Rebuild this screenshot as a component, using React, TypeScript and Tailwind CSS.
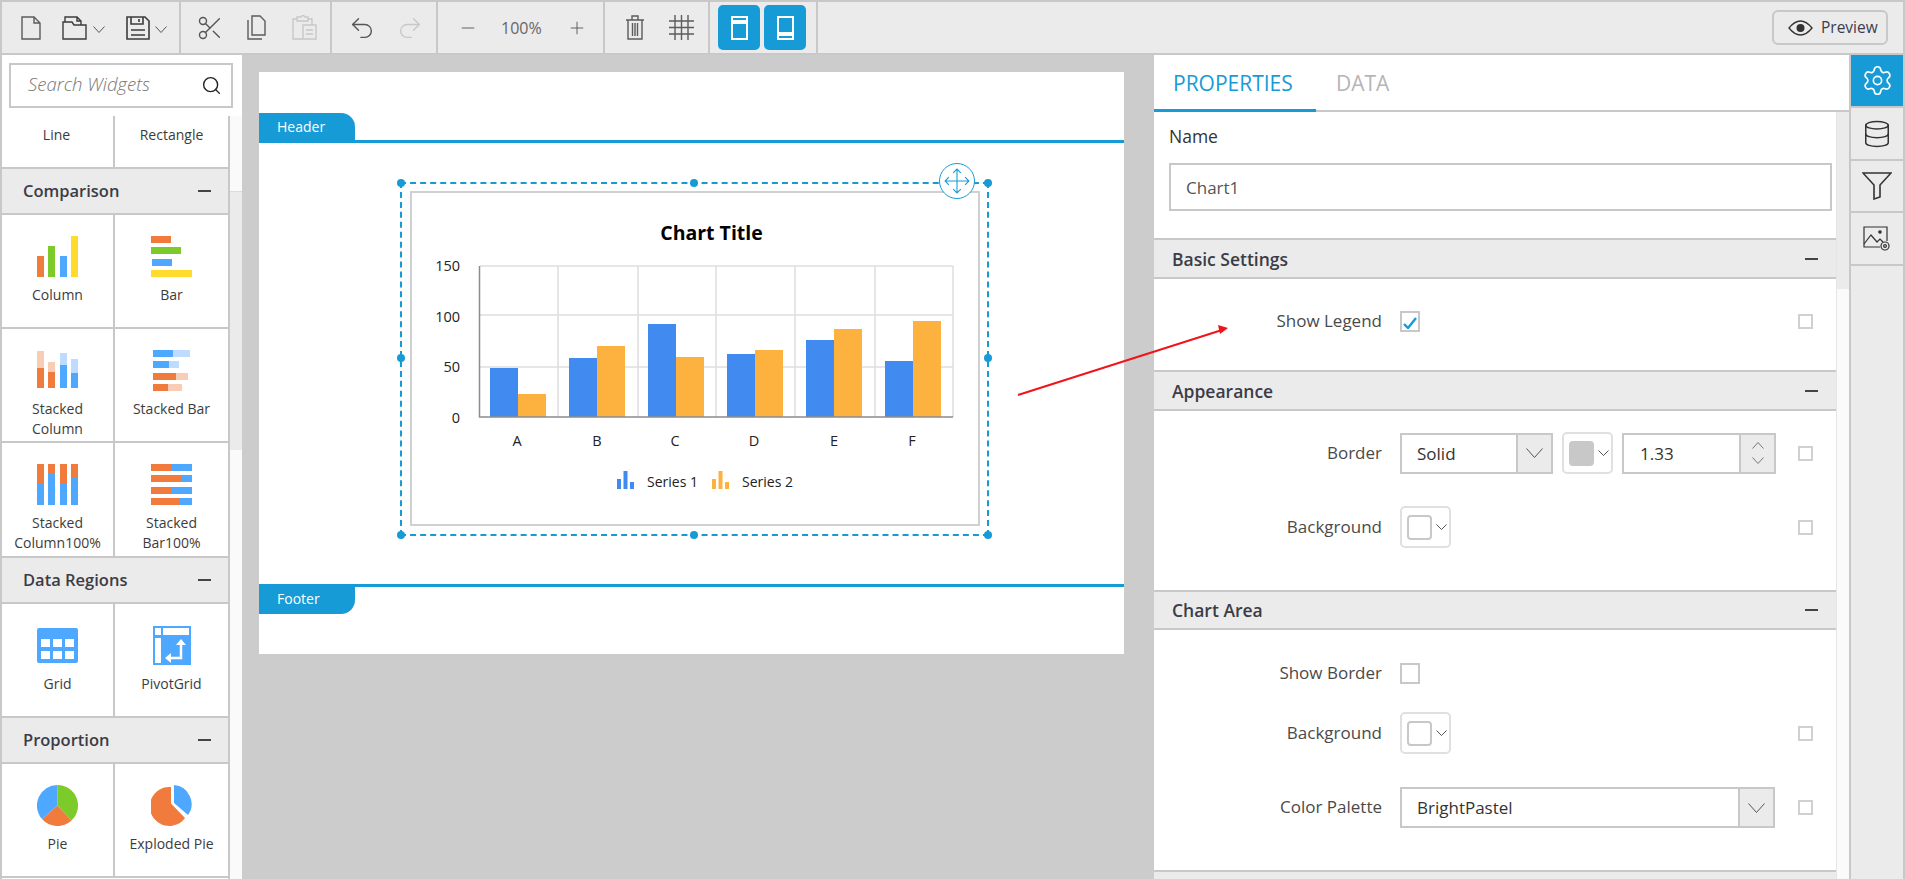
import { Scissors, Undo2, Redo2, Minus, Plus, Search, Settings, Database } from 'lucide-react';

const ORANGE = '#f07b3c';
const LORANGE = '#f9cdb5';
const BLUE = '#4ea8ff';
const LBLUE = '#bddcff';
const GREEN = '#7dcb2b';
const YELLOW = '#ffdb2e';

const bars = [
  { x: 490, a: 368, b: 394 },
  { x: 569, a: 358, b: 346 },
  { x: 648, a: 324, b: 357 },
  { x: 727, a: 354, b: 350 },
  { x: 806, a: 340, b: 329 },
  { x: 885, a: 361, b: 321 },
];

function Chevron({ w = 12, h = 7, color = '#555' }: { w?: number; h?: number; color?: string }) {
  return (
    <svg width={w} height={h} viewBox={`0 0 ${w} ${h}`} fill="none">
      <path d={`M0.5 0.5L${w / 2} ${h - 0.5}L${w - 0.5} 0.5`} stroke={color} strokeWidth="1" />
    </svg>
  );
}

function WidgetIcon({ name }: { name: string }) {
  const r = (x: number, y: number, w: number, h: number, fill: string) => <rect x={x} y={y} width={w} height={h} fill={fill} />;
  let body = null;
  if (name === 'Column') {
    body = (
      <>
        {r(0, 20, 7, 21, ORANGE)}
        {r(11, 10, 7, 31, GREEN)}
        {r(23, 20, 7, 21, BLUE)}
        {r(34, 0, 7, 41, YELLOW)}
      </>
    );
  } else if (name === 'Bar') {
    body = (
      <>
        {r(0, 0, 20, 7, ORANGE)}
        {r(0, 11, 30, 7, GREEN)}
        {r(1, 23, 20, 7, BLUE)}
        {r(0, 34, 41, 7, YELLOW)}
      </>
    );
  } else if (name === 'Stacked Column') {
    body = (
      <>
        {r(0, 1, 7, 17, LORANGE)}
        {r(0, 18, 7, 20, ORANGE)}
        {r(11, 12, 7, 10, LORANGE)}
        {r(11, 22, 7, 16, ORANGE)}
        {r(23, 3, 7, 12, LBLUE)}
        {r(23, 15, 7, 23, BLUE)}
        {r(34, 9, 7, 14, LBLUE)}
        {r(34, 23, 7, 15, BLUE)}
      </>
    );
  } else if (name === 'Stacked Bar') {
    body = (
      <>
        {r(2, 0, 37, 7, LBLUE)}
        {r(2, 0, 20, 7, BLUE)}
        {r(2, 11, 26, 7, LBLUE)}
        {r(2, 11, 16, 7, BLUE)}
        {r(2, 23, 35, 7, LORANGE)}
        {r(2, 23, 23, 7, ORANGE)}
        {r(2, 34, 29, 7, LORANGE)}
        {r(2, 34, 15, 7, ORANGE)}
      </>
    );
  } else if (name === 'Stacked Column100%') {
    body = (
      <>
        {[
          [0, 20],
          [11, 10],
          [23, 20],
          [34, 13],
        ].map(([x, h]) => (
          <g key={x}>
            {r(x, 0, 7, h, ORANGE)}
            {r(x, h, 7, 41 - h, BLUE)}
          </g>
        ))}
      </>
    );
  } else if (name === 'Stacked Bar100%') {
    body = (
      <>
        {[
          [0, 20],
          [11, 30],
          [23, 20],
          [34, 28],
        ].map(([y, w]) => (
          <g key={y}>
            {r(0, y, w, 7, ORANGE)}
            {r(w, y, 41 - w, 7, BLUE)}
          </g>
        ))}
      </>
    );
  } else if (name === 'Grid') {
    body = (
      <>
        <rect x="0" y="3" width="41" height="35" rx="2" fill={BLUE} />
        {[4, 16, 28].map((x) => (
          <g key={x}>
            {r(x, 14, 9, 8, '#fff')}
            {r(x, 26, 9, 8, '#fff')}
          </g>
        ))}
      </>
    );
  } else if (name === 'PivotGrid') {
    body = (
      <>
        {r(2, 1, 38, 39, BLUE)}
        {r(12, 3, 26, 7, '#fff')}
        {r(4, 3, 6, 7, '#fff')}
        {r(4, 13, 6, 25, '#fff')}
        <path d="M18 33H30V18" stroke="#fff" strokeWidth="2.5" fill="none" />
        <path d="M25 20L30 14L35 20Z M20 28L14 33L20 38Z" fill="#fff" />
      </>
    );
  } else if (name === 'Pie') {
    body = (
      <>
        <path d="M20.5 20.5V0A20.5 20.5 0 0 1 34.5 35.5Z" fill={GREEN} />
        <path d="M20.5 20.5L34.5 35.5A20.5 20.5 0 0 1 5 34Z" fill={ORANGE} />
        <path d="M20.5 20.5L5 34A20.5 20.5 0 0 1 20.5 0Z" fill={BLUE} />
      </>
    );
  } else if (name === 'Exploded Pie') {
    body = (
      <>
        <path d="M23 18V0A19 19 0 0 1 37 30Z" fill={BLUE} />
        <path d="M20 18.5V2A19.5 19.5 0 1 0 34 33Z" fill={ORANGE} />
      </>
    );
  }
  return (
    <svg width="41" height="41" viewBox="0 0 41 41" className="mt-[21px] shrink-0">
      {body}
    </svg>
  );
}

function Cell({ name, lines, width }: { name: string; lines?: string[]; width: string }) {
  return (
    <div className={`${width} flex flex-col items-center`}>
      <WidgetIcon name={name} />
      <div className="mt-[8px] text-center text-[14px] leading-[20px] text-[#3c3c3c]">
        {(lines ?? [name]).map((l) => (
          <div key={l}>{l}</div>
        ))}
      </div>
    </div>
  );
}

function CellRow({ a, b, h = 'h-[114px]' }: { a: { name: string; lines?: string[] }; b: { name: string; lines?: string[] }; h?: string }) {
  return (
    <div className={`${h} flex border-b-2 border-[#c8c8c8]`}>
      <Cell {...a} width="w-[111px] border-r-2 border-[#c8c8c8] box-content" />
      <Cell {...b} width="w-[113px]" />
    </div>
  );
}

function GroupHeader({ title }: { title: string }) {
  return (
    <div className="h-[46px] flex items-center justify-between bg-[#ebebeb] border-b-2 border-[#c8c8c8] pl-[21px] pr-[17px]">
      <span className="text-[16.5px] font-semibold text-[#3c3c46]">{title}</span>
      <span className="w-[13px] h-[2px] bg-[#444]" />
    </div>
  );
}

function LeftPanel() {
  return (
    <div className="w-[242px] shrink-0 flex flex-col bg-white border-l-2 border-[#c8c8c8]">
      <div className="h-[61px] pl-[7px] pt-[8px]">
        <div className="w-[224px] h-[45px] border-2 border-[#c8c8c8] flex items-center justify-between pl-[17px] pr-[9px]">
          <span className="italic font-light text-[18.5px] leading-[24px] pb-[3px] text-[#777]">Search Widgets</span>
          <Search size={21} strokeWidth={1.6} className="text-[#222]" />
        </div>
      </div>
      <div className="flex-1 flex min-h-0">
        <div className="w-[228px] border-r-2 border-[#c8c8c8] box-content">
          <div className="h-[53px] flex border-b-2 border-[#c8c8c8] text-[14px] text-[#3c3c3c]">
            <div className="w-[113px] border-r-2 border-[#c8c8c8] flex items-center justify-center pb-[14px] pr-[2px]">Line</div>
            <div className="w-[113px] flex items-center justify-center pb-[14px]">Rectangle</div>
          </div>
          <GroupHeader title="Comparison" />
          <CellRow a={{ name: 'Column' }} b={{ name: 'Bar' }} />
          <CellRow a={{ name: 'Stacked Column', lines: ['Stacked', 'Column'] }} b={{ name: 'Stacked Bar' }} />
          <CellRow
            h="h-[115px]"
            a={{ name: 'Stacked Column100%', lines: ['Stacked', 'Column100%'] }}
            b={{ name: 'Stacked Bar100%', lines: ['Stacked', 'Bar100%'] }}
          />
          <GroupHeader title="Data Regions" />
          <CellRow a={{ name: 'Grid' }} b={{ name: 'PivotGrid' }} />
          <GroupHeader title="Proportion" />
          <CellRow a={{ name: 'Pie' }} b={{ name: 'Exploded Pie' }} />
        </div>
        <div className="w-[12px] bg-[#fafafa] flex flex-col">
          <div className="h-[76px] border-b border-[#dcdcdc]" />
          <div className="h-[258px] bg-[#ebebeb]" />
        </div>
      </div>
    </div>
  );
}

function Toolbar() {
  const sep = 'h-full border-r-2 border-[#c8c8c8] flex items-center shrink-0';
  return (
    <div className="h-[55px] shrink-0 flex items-center bg-[#ebebeb] border-2 border-[#c8c8c8] text-[#555]">
      <div className={`${sep} w-[179px]`}>
        <svg width="20" height="24" viewBox="0 0 20 24" fill="none" className="ml-[19px]" stroke="#5c5c5c" strokeWidth="1.4">
          <path d="M1 1H13L19 7V23H1Z M13 1V7H19" />
        </svg>
        <svg width="26" height="24" viewBox="0 0 26 24" fill="none" className="ml-[21px]" stroke="#3c3c3c" strokeWidth="1.4">
          <path d="M1 23V6H10L12 9H24V23Z M3 6V1H15L19 5V9 M15 1V5H19" />
        </svg>
        <span className="ml-[5px] mt-[4px]">
          <Chevron />
        </span>
        <svg width="24" height="24" viewBox="0 0 24 24" fill="none" className="ml-[21px]" stroke="#3c3c3c" strokeWidth="1.6">
          <path d="M1 1H19L23 5V23H1Z M5 1V8H17V1 M13 3V6 M5 14H19 M5 19H19" />
        </svg>
        <span className="ml-[5px] mt-[4px]">
          <Chevron />
        </span>
      </div>
      <div className={`${sep} w-[151px]`}>
        <Scissors size={28} strokeWidth={1.2} className="ml-[15px] text-[#555]" />
        <svg width="21" height="25" viewBox="0 0 21 25" fill="none" className="ml-[23px]" stroke="#5c5c5c" strokeWidth="1.4">
          <path d="M5 1H13L18 6V20H5Z M1 5V24H15" />
        </svg>
        <svg width="25" height="25" viewBox="0 0 25 25" fill="none" className="ml-[24px]" stroke="#c8c8c8" strokeWidth="1.4">
          <path d="M5 4H1V24H11 M16 4H20V10 M5 6V2H9L11 0L13 2H16V6Z M11 10H24V24H11Z M14 15H21 M14 19H21" />
        </svg>
      </div>
      <div className={`${sep} w-[106px]`}>
        <Undo2 size={28} strokeWidth={1.2} className="ml-[16px] text-[#555]" />
        <Redo2 size={28} strokeWidth={1.2} className="ml-[20px] text-[#c8c8c8]" />
      </div>
      <div className={`${sep} w-[167px]`}>
        <Minus size={20} strokeWidth={1.1} className="ml-[20px] text-[#555]" />
        <span className="ml-[23px] w-[46px] text-[16px] text-[#666]">100%</span>
        <Plus size={20} strokeWidth={1.1} className="ml-[20px] text-[#555]" />
      </div>
      <div className={`${sep} w-[105px]`}>
        <svg width="20" height="25" viewBox="0 0 20 25" fill="none" className="ml-[20px]" stroke="#5c5c5c" strokeWidth="1.4">
          <path d="M1 5H19 M7 5V1H13V5 M3 5V24H17V5 M7.5 8V21 M10 8V21 M12.5 8V21" />
        </svg>
        <svg width="25" height="25" viewBox="0 0 25 25" fill="none" className="ml-[24px]" stroke="#5c5c5c" strokeWidth="1.4">
          <path d="M6 0V25 M12.5 0V25 M19 0V25 M0 6H25 M0 12.5H25 M0 19H25" />
        </svg>
      </div>
      <div className={`${sep} w-[108px] pl-[8px] gap-[4px]`}>
        {[false, true].map((low) => (
          <div key={String(low)} className="w-[42px] h-[45px] rounded-[5px] bg-[#179bd7] flex items-center justify-center">
            <div className={`w-[17px] h-[24px] border-2 border-white flex flex-col ${low ? 'justify-end pb-[2px]' : 'pt-[2px]'}`}>
              <div className="h-[4px] bg-white" />
            </div>
          </div>
        ))}
      </div>
      <div className="flex-1" />
      <div className="mr-[15px] w-[116px] h-[35px] border-2 border-[#c8c8c8] rounded-[6px] flex items-center pl-[14px] gap-[8px]">
        <svg width="25" height="16" viewBox="0 0 25 16" fill="none">
          <path d="M1 8C5 3 9 1 12.5 1S20 3 24 8C20 13 16 15 12.5 15S5 13 1 8Z" stroke="#333" strokeWidth="1.3" />
          <circle cx="12.5" cy="8" r="4" fill="#333" />
        </svg>
        <span className="text-[15.5px] text-[#3c3c50]">Preview</span>
      </div>
    </div>
  );
}

function ChartPreview() {
  const grid = '#dedede';
  return (
    <svg width="565" height="331" viewBox="412 193 565 331" className="block" fontFamily="'Open Sans', sans-serif">
      <text x="711.5" y="240" textAnchor="middle" fontSize="19.5" fontWeight="700" fill="#000">
        Chart Title
      </text>
      {[558, 638, 716, 795, 875, 953].map((x) => (
        <line key={x} x1={x} x2={x} y1={266} y2={417} stroke={grid} strokeWidth="1.5" />
      ))}
      {[266, 315, 367].map((y) => (
        <line key={y} x1={480} x2={953} y1={y} y2={y} stroke={grid} strokeWidth="1.5" />
      ))}
      {bars.map((b) => (
        <g key={b.x}>
          <rect x={b.x} y={b.a} width={28} height={417 - b.a} fill="#418bf0" />
          <rect x={b.x + 28} y={b.b} width={28} height={417 - b.b} fill="#fdb240" />
        </g>
      ))}
      <path d="M479.5 266V417H953" fill="none" stroke="#8c8c8c" strokeWidth="1.5" />
      {[
        ['150', 271],
        ['100', 322],
        ['50', 372],
        ['0', 423],
      ].map(([t, y]) => (
        <text key={t} x="460" y={y} textAnchor="end" fontSize="14.5" fill="#222">
          {t}
        </text>
      ))}
      {['A', 'B', 'C', 'D', 'E', 'F'].map((t, i) => (
        <text key={t} x={[517, 597, 675, 754, 834, 912][i]} y="446" textAnchor="middle" fontSize="14.5" fill="#222">
          {t}
        </text>
      ))}
      {[
        { x: 617, c: '#418bf0', t: 'Series 1', tx: 647 },
        { x: 712, c: '#fdb240', t: 'Series 2', tx: 742 },
      ].map((l) => (
        <g key={l.t}>
          <rect x={l.x} y={479} width={4} height={10} fill={l.c} />
          <rect x={l.x + 6.5} y={471} width={4} height={18} fill={l.c} />
          <rect x={l.x + 13} y={482} width={4} height={7} fill={l.c} />
          <text x={l.tx} y="487" fontSize="14" fill="#222">
            {l.t}
          </text>
        </g>
      ))}
    </svg>
  );
}

function Handle({ className }: { className: string }) {
  return <span className={`absolute w-[8px] h-[8px] rounded-full bg-[#179bd7] ${className}`} />;
}

function Canvas() {
  return (
    <div className="w-[912px] shrink-0 bg-[#cccccc] pl-[17px] pt-[17px]">
      <div className="w-[865px] h-[582px] bg-white pt-[41px]">
        <div className="h-[28px] w-[96px] -mb-[1px] bg-[#179bd7] rounded-tr-[14px] pl-[18px] text-[14px] leading-[28px] text-white">Header</div>
        <div className="h-[444px] border-t-3 border-[#179bd7] pt-[39px] pl-[141px]">
          <div className="relative w-[589px] h-[354px] border-2 border-dashed border-[#179bd7] px-[8px] py-[7px]">
            <div className="border-2 border-[#d0d0d0] mr-[-1px]">
              <ChartPreview />
            </div>
            <Handle className="-left-[5px] -top-[5px]" />
            <Handle className="left-[288px] -top-[5px]" />
            <Handle className="-right-[5px] -top-[5px]" />
            <Handle className="-left-[5px] top-[170px]" />
            <Handle className="-right-[5px] top-[170px]" />
            <Handle className="-left-[5px] -bottom-[5px]" />
            <Handle className="left-[288px] -bottom-[5px]" />
            <Handle className="-right-[5px] -bottom-[5px]" />
            <div className="absolute left-[537px] -top-[21px] w-[36px] h-[36px] rounded-full bg-white border-[1.5px] border-[#179bd7] flex items-center justify-center">
              <svg width="26" height="26" viewBox="0 0 24 24" fill="none" stroke="#179bd7" strokeWidth="1">
                <path d="M12 1V23 M1 12H23 M8.5 4.5L12 1L15.5 4.5 M8.5 19.5L12 23L15.5 19.5 M4.5 8.5L1 12L4.5 15.5 M19.5 8.5L23 12L19.5 15.5" />
              </svg>
            </div>
          </div>
        </div>
        <div className="border-t-3 border-[#179bd7]">
          <div className="h-[27px] w-[96px] bg-[#179bd7] rounded-br-[14px] pl-[18px] text-[14px] leading-[24px] text-white">Footer</div>
        </div>
      </div>
    </div>
  );
}

function SectionHeader({ title, h = 'h-[41px]' }: { title: string; h?: string }) {
  return (
    <div className={`${h} shrink-0 flex items-center justify-between bg-[#ebebeb] border-y-2 border-[#c8c8c8] pl-[18px] pr-[18px]`}>
      <span className="text-[17.5px] font-semibold leading-[24px] text-[#3c3c46]">{title}</span>
      <span className="w-[13px] h-[2px] bg-[#444]" />
    </div>
  );
}

function Row({ label, mt, box = true, children }: { label: string; mt: string; box?: boolean; children: React.ReactNode }) {
  return (
    <div className={`${mt} flex items-center`}>
      <div className="w-[228px] pb-[1px] text-right text-[17px] leading-[20px] text-[#4a4a4a]">{label}</div>
      <div className="ml-[18px] flex items-center">{children}</div>
      {box && <span className="ml-auto mr-[23px] w-[15px] h-[15px] border-2 border-[#d0d0d0]" />}
    </div>
  );
}

function CheckBox({ checked }: { checked?: boolean }) {
  return (
    <span className="w-[20px] h-[21px] border-2 border-[#c8c8c8] flex items-center justify-center">
      {checked && (
        <svg width="14" height="12" viewBox="0 0 14 12" fill="none" className="mt-[3px]">
          <path d="M1 7L5 11L13 1" stroke="#179bd7" strokeWidth="2.4" />
        </svg>
      )}
    </span>
  );
}

function Picker({ color = '#ffffff' }: { color?: string }) {
  return (
    <div className="w-[51px] h-[42px] border-2 border-[#e0e0e0] rounded-[5px] flex items-center pl-[5px] gap-[4px]">
      <span className="w-[25px] h-[25px] rounded-[4px] border-2 border-[#c8c8c8]" style={{ backgroundColor: color }} />
      <Chevron w={11} h={6} />
    </div>
  );
}

function Select({ value, width }: { value: string; width: string }) {
  return (
    <div className={`${width} h-[41px] border-2 border-[#c8c8c8] flex`}>
      <div className="flex-1 pl-[15px] text-[17px] leading-[37px] text-[#333]">{value}</div>
      <div className="w-[35px] bg-[#ebebeb] border-l-2 border-[#c8c8c8] flex items-center justify-center">
        <Chevron w={17} h={10} />
      </div>
    </div>
  );
}

function Properties() {
  return (
    <div className="w-[695px] shrink-0 flex flex-col bg-white">
      <div className="h-[57px] shrink-0 flex border-b-2 border-[#c8c8c8] text-[21px]">
        <div className="w-[162px] h-[57px] border-b-3 border-[#179bd7] pl-[19px] leading-[56px] text-[#179bd7]">PROPERTIES</div>
        <div className="pl-[20px] leading-[56px] text-[#b5b5b5]">DATA</div>
      </div>
      <div className="flex-1 flex min-h-0">
        <div className="w-[682px] flex flex-col overflow-hidden">
          <div className="h-[126px] shrink-0 pl-[15px] pt-[12px]">
            <div className="text-[17.5px] leading-[24px] font-medium text-[#333]">Name</div>
            <div className="mt-[15px] w-[663px] h-[48px] border-2 border-[#c8c8c8] pl-[15px] text-[17px] leading-[46px] text-[#555]">Chart1</div>
          </div>
          <SectionHeader title="Basic Settings" />
          <div className="h-[91px] shrink-0">
            <Row label="Show Legend" mt="mt-[32px]">
              <CheckBox checked />
            </Row>
          </div>
          <SectionHeader title="Appearance" />
          <div className="h-[179px] shrink-0">
            <Row label="Border" mt="mt-[21px]">
              <Select value="Solid" width="w-[153px]" />
              <div className="ml-[9px]">
                <Picker color="#c8c8c8" />
              </div>
              <div className="ml-[9px] w-[154px] h-[41px] border-2 border-[#c8c8c8] flex">
                <div className="flex-1 pl-[16px] text-[17px] leading-[37px] text-[#333]">1.33</div>
                <div className="w-[35px] bg-[#ebebeb] border-l-2 border-[#c8c8c8] flex flex-col items-center justify-center gap-[8px]">
                  <span className="rotate-180 flex">
                    <Chevron w={12} h={7} color="#777" />
                  </span>
                  <Chevron w={12} h={7} color="#777" />
                </div>
              </div>
            </Row>
            <Row label="Background" mt="mt-[32px]">
              <Picker />
            </Row>
          </div>
          <SectionHeader title="Chart Area" h="h-[40px]" />
          <div className="h-[240px] shrink-0">
            <Row label="Show Border" mt="mt-[33px]" box={false}>
              <CheckBox />
            </Row>
            <Row label="Background" mt="mt-[28px]">
              <Picker />
            </Row>
            <Row label="Color Palette" mt="mt-[33px]">
              <Select value="BrightPastel" width="w-[375px]" />
            </Row>
          </div>
          <SectionHeader title="" />
        </div>
        <div className="w-[13px] bg-[#fafafa] border-l border-[#e6e6e6]">
          <div className="h-[177px] bg-[#ebebeb]" />
        </div>
      </div>
    </div>
  );
}

function Rail() {
  const item = 'flex items-center justify-center border-b-2 border-[#c8c8c8]';
  return (
    <div className="flex-1 flex flex-col bg-[#ebebeb] border-l-2 border-r-2 border-[#c8c8c8]">
      <div className={`${item} h-[53px] bg-[#179bd7]`}>
        <Settings size={33} strokeWidth={1.2} className="text-white" />
      </div>
      <div className={`${item} h-[53px]`}>
        <Database size={30} strokeWidth={1.2} className="text-[#333]" />
      </div>
      <div className={`${item} h-[52px]`}>
        <svg width="30" height="28" viewBox="0 0 30 28" fill="none" stroke="#333" strokeWidth="1.6">
          <path d="M1 1H29L18 13V25L12 27V13Z" />
        </svg>
      </div>
      <div className={`${item} h-[53px]`}>
        <svg width="28" height="26" viewBox="0 0 28 26" fill="none" stroke="#333" strokeWidth="1.2">
          <path d="M17 21H1V1H24V15" />
          <path d="M1 18L8 9L14 16L17 13L20 16" />
          <circle cx="17" cy="6" r="1.2" fill="#333" />
          <circle cx="22" cy="20" r="4" />
          <circle cx="22" cy="20" r="1.4" />
        </svg>
      </div>
    </div>
  );
}

export default function App() {
  return (
    <div className="relative w-[1905px] h-[879px] overflow-hidden bg-[#ebebeb] flex flex-col font-['Open_Sans',sans-serif]">
      <Toolbar />
      <div className="flex-1 flex min-h-0">
        <LeftPanel />
        <Canvas />
        <Properties />
        <Rail />
      </div>
      {/* annotation arrow drawn over the screenshot */}
      <svg className="absolute left-0 top-0 pointer-events-none" width="1905" height="879" fill="none">
        <line x1="1018" y1="395" x2="1222" y2="330" stroke="#f0141a" strokeWidth="2" />
        <path d="M1228 328L1218 325L1220 334Z" fill="#f0141a" />
      </svg>
    </div>
  );
}
